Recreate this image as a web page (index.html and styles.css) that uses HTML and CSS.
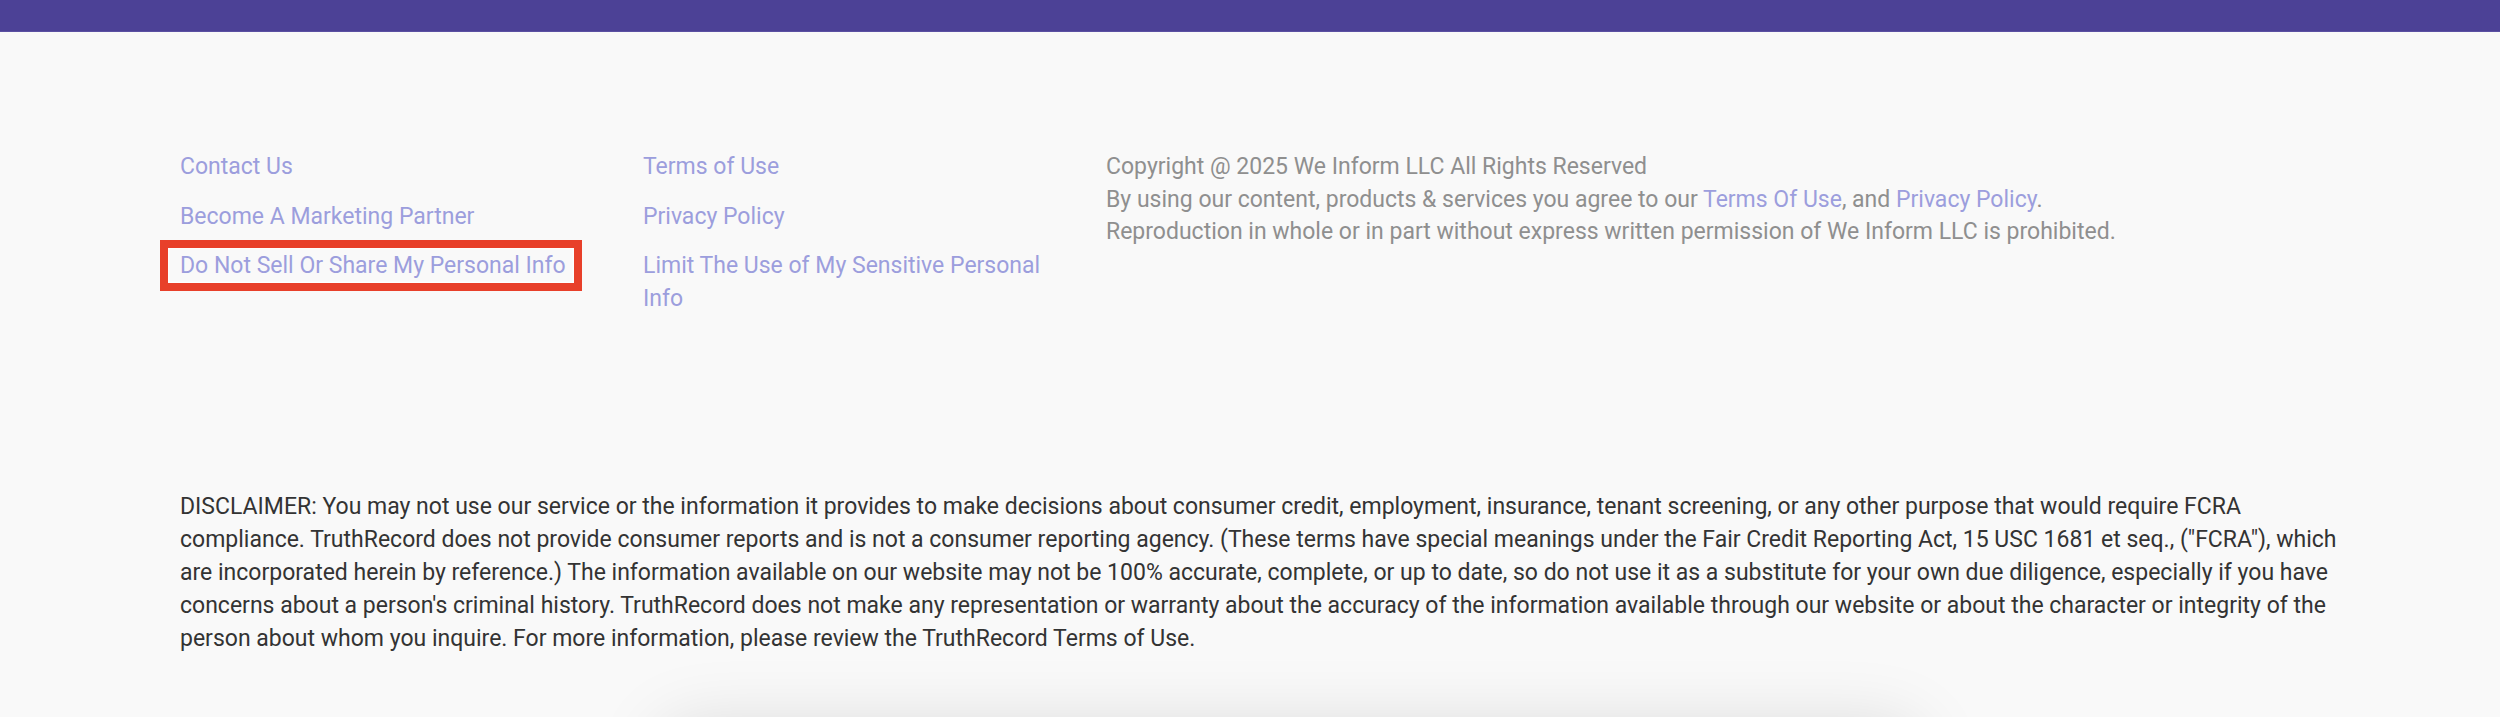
FILE: index.html
```html
<!DOCTYPE HTML>
<html>
<head>
    <meta charset="utf-8">
    <meta name="viewport" content="width=device-width, initial-scale=1">
    <link rel="stylesheet" href="styles.css">
</head>
<body>
    <div class="top-bar"></div>

    <footer class="footer">
        <div class="footer-links">
            <ul class="link-list">
                <li><a href="#">Contact Us</a></li>
                <li><a href="#">Become A Marketing Partner</a></li>
                <li><a href="#" class="highlighted">Do Not Sell Or Share My Personal Info</a></li>
            </ul>
            <ul class="link-list">
                <li><a href="#">Terms of Use</a></li>
                <li><a href="#">Privacy Policy</a></li>
                <li><a href="#">Limit The Use of My Sensitive Personal Info</a></li>
            </ul>
            <div class="copyright">
                <p>Copyright @ 2025 We Inform LLC All Rights Reserved</p>
                <p>By using our content, products &amp; services you agree to our <a href="#">Terms Of Use</a>, and <a href="#">Privacy Policy</a>.</p>
                <p>Reproduction in whole or in part without express written permission of We Inform LLC is prohibited.</p>
            </div>
        </div>

        <p class="disclaimer">DISCLAIMER: You may not use our service or the information it provides to make decisions about consumer credit, employment, insurance, tenant screening, or any other purpose that would require FCRA compliance. TruthRecord does not provide consumer reports and is not a consumer reporting agency. (These terms have special meanings under the Fair Credit Reporting Act, 15 USC 1681 et seq., ("FCRA"), which are incorporated herein by reference.) The information available on our website may not be 100% accurate, complete, or up to date, so do not use it as a substitute for your own due diligence, especially if you have concerns about a person's criminal history. TruthRecord does not make any representation or warranty about the accuracy of the information available through our website or about the character or integrity of the person about whom you inquire. For more information, please review the TruthRecord Terms of Use.</p>
    </footer>

    <div class="popup-card"></div>
</body>
</html>
```

FILE: styles.css
```css
body {
    font-family: Roboto, "Liberation Sans", Arial, sans-serif;
    font-size: 23px;
    line-height: 32.5px;
    background-color: #f9f9f9;
    margin: 0;
    padding: 0;
    overflow: hidden;
}

.top-bar {
    height: 31px;
    background-color: #4c4196;
    border-bottom: 1px solid #5b50a2;
}

.footer {
    padding: 119px 160px 0 180px;
}

.footer-links {
    display: grid;
    grid-template-columns: 423px 423px 1fr;
    column-gap: 40px;
}

.link-list {
    list-style: none;
    margin: 0;
    padding: 0;
}

.link-list li {
    margin-bottom: 17px;
}

.link-list li:last-child {
    margin-bottom: 0;
}

a {
    color: #9c9edd;
    text-decoration: none;
}

.highlighted {
    position: relative;
}

.highlighted::after {
    content: "";
    position: absolute;
    top: -12px;
    right: -16px;
    bottom: -12px;
    left: -20px;
    border: 8px solid #e8402a;
    box-shadow: inset 0 0 0 1.5px rgba(255, 255, 255, 0.85);
}

.copyright {
    color: #8f8f8f;
}

.copyright p {
    margin: 0;
}

.disclaimer {
    color: #333333;
    line-height: 33px;
    margin: 175px 0 0;
}

.popup-card {
    width: 1260px;
    height: 300px;
    margin: 70px 0 0 660px;
    background-color: #f9f9f9;
    border-radius: 30px;
    box-shadow: 0 0 70px rgba(0, 0, 0, 0.13);
}
```
